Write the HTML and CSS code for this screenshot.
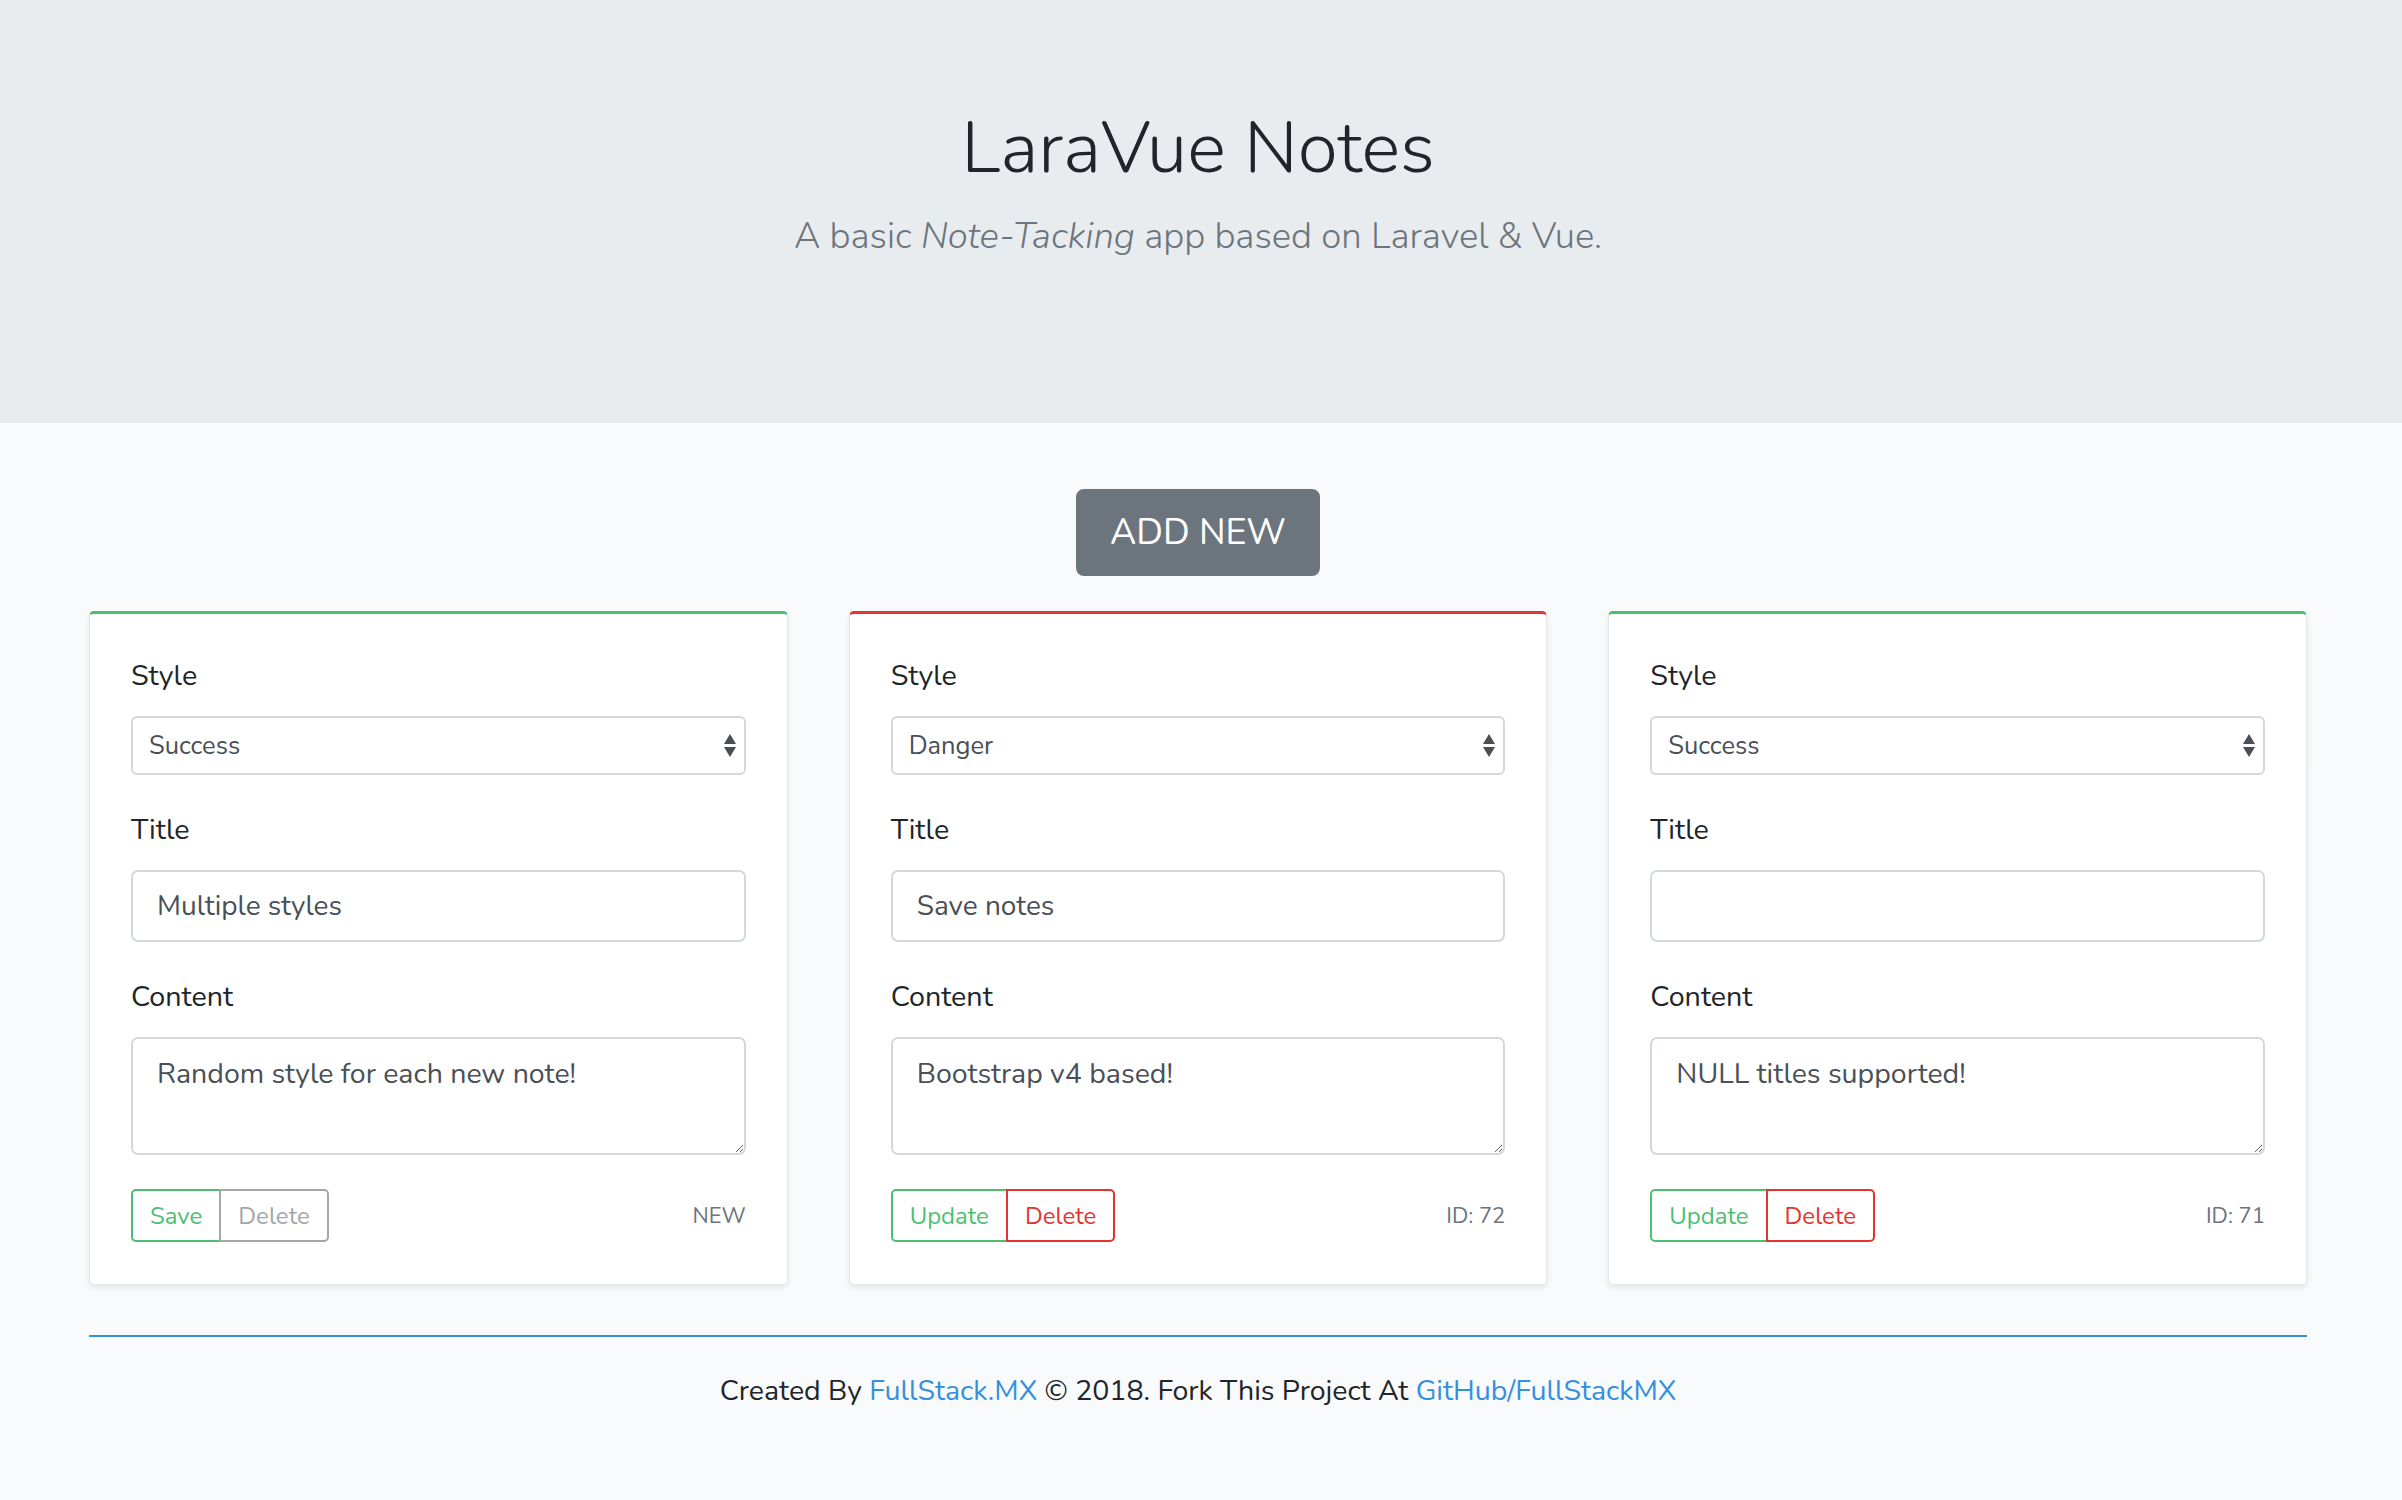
FILE: index.html
```html
<!DOCTYPE html>
<html lang="en">
<head>
    <meta charset="UTF-8">
    <meta name="viewport" content="width=device-width, initial-scale=1.0">
    <title>LaraVue Notes</title>
    <link rel="stylesheet" href="styles.css">
</head>
<body>
    <header class="hero">
        <h1 class="hero-title">LaraVue Notes</h1>
        <p class="hero-lead">A basic <em>Note-Tacking</em> app based on Laravel &amp; Vue.</p>
    </header>

    <main class="page">
        <div class="actions">
            <button type="button" class="btn-add">ADD NEW</button>
        </div>

        <div class="notes">
            <!-- new note, not saved yet -->
            <div class="note note-success">
                <div class="form-group">
                    <label>Style</label>
                    <div class="select-wrap">
                        <select class="select">
                            <option selected>Success</option>
                            <option>Danger</option>
                        </select>
                        <svg class="select-arrows" viewBox="0 0 12 23" width="12" height="23"><path d="M6 0L0 10h12zM6 23L0 13h12z"/></svg>
                    </div>
                </div>
                <div class="form-group">
                    <label>Title</label>
                    <input type="text" class="input" value="Multiple styles">
                </div>
                <div class="form-group">
                    <label>Content</label>
                    <textarea class="input textarea">Random style for each new note!</textarea>
                </div>
                <div class="note-footer">
                    <div class="btn-group">
                        <button type="button" class="btn btn-green">Save</button>
                        <button type="button" class="btn btn-muted">Delete</button>
                    </div>
                    <span class="note-id">NEW</span>
                </div>
            </div>

            <div class="note note-danger">
                <div class="form-group">
                    <label>Style</label>
                    <div class="select-wrap">
                        <select class="select">
                            <option>Success</option>
                            <option selected>Danger</option>
                        </select>
                        <svg class="select-arrows" viewBox="0 0 12 23" width="12" height="23"><path d="M6 0L0 10h12zM6 23L0 13h12z"/></svg>
                    </div>
                </div>
                <div class="form-group">
                    <label>Title</label>
                    <input type="text" class="input" value="Save notes">
                </div>
                <div class="form-group">
                    <label>Content</label>
                    <textarea class="input textarea">Bootstrap v4 based!</textarea>
                </div>
                <div class="note-footer">
                    <div class="btn-group">
                        <button type="button" class="btn btn-green">Update</button>
                        <button type="button" class="btn btn-red">Delete</button>
                    </div>
                    <span class="note-id">ID: 72</span>
                </div>
            </div>

            <div class="note note-success">
                <div class="form-group">
                    <label>Style</label>
                    <div class="select-wrap">
                        <select class="select">
                            <option selected>Success</option>
                            <option>Danger</option>
                        </select>
                        <svg class="select-arrows" viewBox="0 0 12 23" width="12" height="23"><path d="M6 0L0 10h12zM6 23L0 13h12z"/></svg>
                    </div>
                </div>
                <div class="form-group">
                    <label>Title</label>
                    <input type="text" class="input" value="">
                </div>
                <div class="form-group">
                    <label>Content</label>
                    <textarea class="input textarea">NULL titles supported!</textarea>
                </div>
                <div class="note-footer">
                    <div class="btn-group">
                        <button type="button" class="btn btn-green">Update</button>
                        <button type="button" class="btn btn-red">Delete</button>
                    </div>
                    <span class="note-id">ID: 71</span>
                </div>
            </div>
        </div>

        <footer class="footer">
            <p>Created By <a href="#">FullStack.MX</a> &copy; 2018. Fork This Project At <a href="#">GitHub/FullStackMX</a></p>
        </footer>
    </main>
</body>
</html>
```

FILE: styles.css
```css
body {
    margin: 0;
    font-family: "Nunito", "Lato", "Open Sans", sans-serif;
    background-color: #f8fafc;
    color: #212529;
    min-height: 100vh;
}

.hero {
    box-sizing: border-box;
    height: 423px;
    padding: 105px 6px 0 0;
    background-color: #e9ecef;
    text-align: center;
}

.hero-title {
    margin: 0 0 18px;
    font-size: 73px;
    font-weight: 300;
    line-height: 1.2;
}

.hero-lead {
    margin: 0;
    font-size: 36.5px;
    font-weight: 300;
    line-height: 1.4;
    color: #6c757d;
}

.page {
    padding: 0 95px 0 89px;
}

.actions {
    display: flex;
    justify-content: center;
    margin: 66px 0 35px;
}

.btn-add {
    height: 87px;
    padding: 0 32px;
    font-family: inherit;
    font-size: 36px;
    color: #fff;
    background-color: #6c757d;
    border: 2px solid #6c757d;
    border-radius: 8px;
    cursor: pointer;
}

.notes {
    display: grid;
    grid-template-columns: repeat(3, 1fr);
    gap: 61px;
}

.note {
    padding: 40px 41px 42px;
    background-color: #fff;
    border: 1px solid rgba(0, 0, 0, 0.1);
    border-top: 3px solid #4dbe70;
    border-radius: 5px;
    box-shadow: 0 3px 6px rgba(0, 0, 0, 0.08);
}

.note-danger {
    border-top-color: #e3342f;
}

.form-group {
    margin-bottom: 33px;
}

label {
    display: block;
    margin-bottom: 19px;
    font-size: 28.7px;
    line-height: 43px;
}

.select-wrap {
    position: relative;
}

.select {
    display: block;
    box-sizing: border-box;
    width: 100%;
    height: 59px;
    padding: 0 40px 0 16px;
    font-family: inherit;
    font-size: 25.5px;
    color: #495057;
    background-color: #fff;
    border: 2px solid #d3d8dd;
    border-radius: 6px;
    appearance: none;
    -webkit-appearance: none;
}

.select-arrows {
    position: absolute;
    right: 10px;
    top: 18px;
    fill: #4a4f55;
    pointer-events: none;
}

.input {
    display: block;
    box-sizing: border-box;
    width: 100%;
    height: 72px;
    padding: 0 24px;
    font-family: inherit;
    font-size: 28px;
    color: #495057;
    background-color: #fff;
    border: 2px solid #d3d8dd;
    border-radius: 7px;
}

.textarea {
    height: 118px;
    padding: 12px 24px;
    font-size: 28.5px;
    line-height: 1.6;
}

.note-footer {
    display: flex;
    align-items: center;
    justify-content: space-between;
    margin-top: 34px;
}

.btn-group {
    display: flex;
}

.btn {
    height: 53px;
    padding: 0 17px;
    font-family: inherit;
    font-size: 24px;
    background-color: #fff;
    border: 2px solid;
    cursor: pointer;
}

.btn:first-child {
    border-radius: 5px 0 0 5px;
}

.btn:last-child {
    margin-left: -2px;
    border-radius: 0 5px 5px 0;
}

.btn-green {
    color: #4dbe70;
    border-color: #4dbe70;
}

.btn-red {
    color: #e3342f;
    border-color: #e3342f;
}

.btn-muted {
    color: #a2a7ac;
    border-color: #a2a7ac;
}

.note-id {
    font-size: 22px;
    color: #6c757d;
}

.footer {
    margin-top: 50px;
    border-top: 2px solid #3490dc;
    text-align: center;
}

.footer p {
    margin: 31px 0 0;
    font-size: 28.5px;
    line-height: 1.6;
}

.footer a {
    color: #3490dc;
    text-decoration: none;
}
```
